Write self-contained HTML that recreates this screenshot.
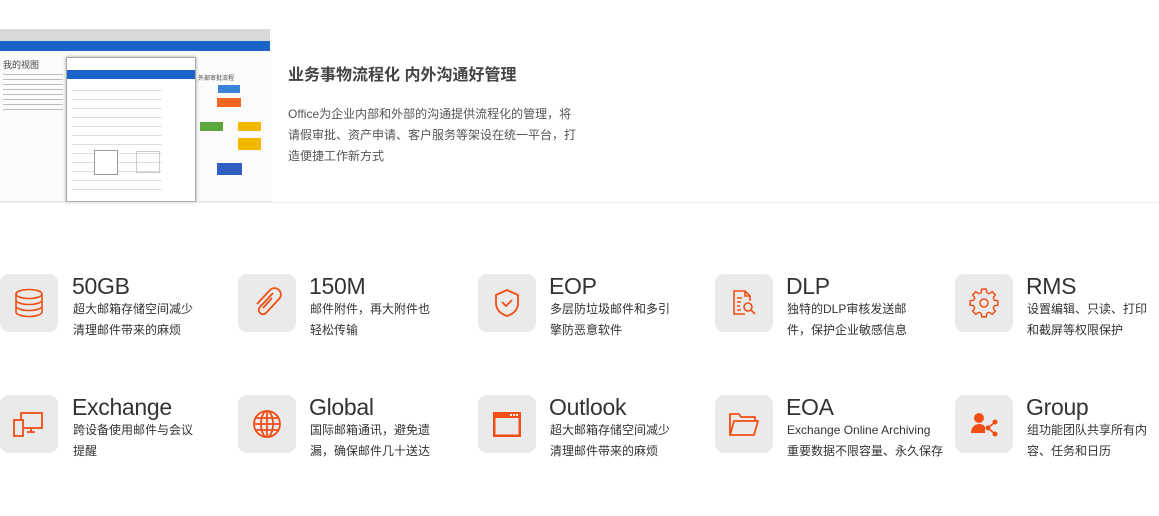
<!DOCTYPE html>
<html><head><meta charset="utf-8"><style>
*{margin:0;padding:0;box-sizing:border-box}
body{width:1159px;height:516px;background:#fff;font-family:"Liberation Sans","Noto Sans CJK SC",sans-serif;position:relative;overflow:hidden;color:#333}
.a{position:absolute}
.box{position:absolute;width:58px;height:58px;border-radius:9px;background:#ebeaea}
.box svg{position:absolute;left:13px;top:13px}
.t{position:absolute;font-size:23px;color:#333;line-height:26px;font-weight:normal;letter-spacing:-0.3px}
.d{position:absolute;font-size:12px;color:#333;line-height:21px}
</style></head><body>
<!-- screenshot -->
<div class="a" style="left:0;top:29px;width:272px;height:173px;background:#fbfbfb;border-bottom:1px solid #e8e8e8"></div>
<div class="a" style="left:0;top:29px;width:270px;height:12px;background:#d9d9d9"></div>
<div class="a" style="left:0;top:41px;width:270px;height:10px;background:#1a63c7"></div>
<div class="a" style="left:3px;top:58px;font-size:9px;color:#444">我的视图</div>
<div class="a" style="left:3px;top:74px;width:60px;height:40px;background:repeating-linear-gradient(#bbb 0 1px,transparent 1px 5px)"></div>
<div class="a" style="left:66px;top:57px;width:130px;height:145px;background:#fff;border:1px solid #aaa;box-shadow:0 0 3px #999"></div>
<div class="a" style="left:67px;top:70px;width:128px;height:9px;background:#1a63c7"></div>
<div class="a" style="left:72px;top:90px;width:90px;height:100px;background:repeating-linear-gradient(#ddd 0 1px,transparent 1px 9px)"></div>
<div class="a" style="left:94px;top:150px;width:24px;height:25px;border:1px solid #999;background:#fff"></div>
<div class="a" style="left:136px;top:151px;width:24px;height:22px;border:1px solid #ccc"></div>
<div class="a" style="left:218px;top:85px;width:22px;height:8px;background:#3b83d6"></div>
<div class="a" style="left:217px;top:98px;width:24px;height:9px;background:#f26522"></div>
<div class="a" style="left:200px;top:122px;width:23px;height:9px;background:#5aa83c"></div>
<div class="a" style="left:238px;top:122px;width:23px;height:9px;background:#f5b800"></div>
<div class="a" style="left:238px;top:138px;width:23px;height:12px;background:#f5b800"></div>
<div class="a" style="left:217px;top:163px;width:25px;height:12px;background:#2f5fc0"></div>
<div class="a" style="left:198px;top:73px;font-size:6px;color:#444">外部审批流程</div>
<!-- divider -->
<div class="a" style="left:0;top:202px;width:1159px;height:1px;background:#ececec"></div>
<div class="a" style="left:288px;top:66px;font-size:16px;font-weight:bold;color:#444;line-height:20px">业务事物流程化 内外沟通好管理</div>
<div class="a" style="left:288px;top:104px;width:300px;font-size:12px;color:#555;line-height:21px">Office为企业内部和外部的沟通提供流程化的管理，将<br>请假审批、资产申请、客户服务等架设在统一平台，打<br>造便捷工作新方式</div>

<!-- row 1 -->
<div class="box" style="left:0;top:274px"><svg width="32" height="32" viewBox="0 0 32 32" fill="none" stroke="#f04e14" stroke-width="1.6"><ellipse cx="16" cy="7" rx="13" ry="4.5"/><path d="M3 7v18c0 2.5 6 4.5 13 4.5s13-2 13-4.5V7M3 13c0 2.5 6 4.5 13 4.5s13-2 13-4.5M3 19c0 2.5 6 4.5 13 4.5s13-2 13-4.5"/></svg></div>
<div class="t" style="left:72px;top:273px">50GB</div>
<div class="d" style="left:73px;top:299px">超大邮箱存储空间减少<br>清理邮件带来的麻烦</div>

<div class="box" style="left:238px;top:274px"><svg width="32" height="32" viewBox="0 0 32 32" fill="none" stroke="#f04e14" stroke-width="1.8"><path d="M22 6L9 20a4 4 0 0 0 6 6l13-14a6 6 0 0 0-9-9L6 17"/><path d="M21 11L12 21"/></svg></div>
<div class="t" style="left:309px;top:273px">150M</div>
<div class="d" style="left:310px;top:299px">邮件附件，再大附件也<br>轻松传输</div>

<div class="box" style="left:478px;top:274px"><svg width="32" height="32" viewBox="0 0 32 32" fill="none" stroke="#f04e14" stroke-width="1.8"><path d="M16 3l11 5v8c0 7-5 11-11 13C10 27 5 23 5 16V8z"/><path d="M11 15l4 4 6-6"/></svg></div>
<div class="t" style="left:549px;top:273px">EOP</div>
<div class="d" style="left:550px;top:299px">多层防垃圾邮件和多引<br>擎防恶意软件</div>

<div class="box" style="left:715px;top:274px"><svg width="32" height="32" viewBox="0 0 32 32" fill="none" stroke="#f04e14" stroke-width="1.6"><path d="M22 14V9l-5-5H6v23h11"/><path d="M17 4v5h5M9 11h5M9 15h4M9 19h3M9 23h4"/><circle cx="20" cy="20" r="4"/><path d="M23 23l4 4"/></svg></div>
<div class="t" style="left:786px;top:273px">DLP</div>
<div class="d" style="left:787px;top:299px">独特的DLP审核发送邮<br>件，保护企业敏感信息</div>

<div class="box" style="left:955px;top:274px"><svg width="32" height="32" viewBox="0 0 32 32" fill="none" stroke="#f04e14" stroke-width="1.5">
<defs><path id="tooth" d="M26.09 13.1L29.83 13.81V18.19L26.09 18.9"/></defs>
<use href="#tooth"/><use href="#tooth" transform="rotate(45 16 16)"/><use href="#tooth" transform="rotate(90 16 16)"/><use href="#tooth" transform="rotate(135 16 16)"/><use href="#tooth" transform="rotate(180 16 16)"/><use href="#tooth" transform="rotate(225 16 16)"/><use href="#tooth" transform="rotate(270 16 16)"/><use href="#tooth" transform="rotate(315 16 16)"/>
<circle cx="16" cy="16" r="10.5" stroke-dasharray="0 2.93 2.39 2.93"/>
<circle cx="16" cy="16" r="4"/></svg></div>
<div class="t" style="left:1026px;top:273px">RMS</div>
<div class="d" style="left:1027px;top:299px">设置编辑、只读、打印<br>和截屏等权限保护</div>

<!-- row 2 -->
<div class="box" style="left:0;top:395px"><svg width="32" height="32" viewBox="0 0 32 32" fill="none" stroke="#f04e14" stroke-width="1.8"><rect x="8" y="5" width="21" height="15"/><path d="M14 24h8M18 20v4"/><rect x="1" y="12" width="9" height="16" fill="#ebeaea"/></svg></div>
<div class="t" style="left:72px;top:394px">Exchange</div>
<div class="d" style="left:73px;top:420px">跨设备使用邮件与会议<br>提醒</div>

<div class="box" style="left:238px;top:395px"><svg width="32" height="32" viewBox="0 0 32 32" fill="none" stroke="#f04e14" stroke-width="1.8"><circle cx="16" cy="16" r="13"/><ellipse cx="16" cy="16" rx="6" ry="13"/><path d="M3 16h26M16 3v26M5 10h22M5 22h22"/></svg></div>
<div class="t" style="left:309px;top:394px">Global</div>
<div class="d" style="left:310px;top:420px">国际邮箱通讯，避免遗<br>漏，确保邮件几十送达</div>

<div class="box" style="left:478px;top:395px"><svg width="32" height="32" viewBox="0 0 32 32"><rect x="2" y="4" width="28" height="25" fill="#f04e14"/><rect x="4.5" y="10" width="23" height="16.5" fill="#ebeaea"/><rect x="19" y="6" width="2" height="2" fill="#fff"/><rect x="22" y="6" width="2" height="2" fill="#fff"/><rect x="25" y="6" width="2" height="2" fill="#fff"/></svg></div>
<div class="t" style="left:549px;top:394px">Outlook</div>
<div class="d" style="left:550px;top:420px">超大邮箱存储空间减少<br>清理邮件带来的麻烦</div>

<div class="box" style="left:715px;top:395px"><svg width="32" height="32" viewBox="0 0 32 32" fill="none" stroke="#f04e14" stroke-width="1.8" stroke-linejoin="round"><path d="M2 27V6h9l2 3h14v4"/><path d="M2 27l4-14h24l-4 14z"/></svg></div>
<div class="t" style="left:786px;top:394px">EOA</div>
<div class="d" style="left:787px;top:420px">Exchange Online Archiving<br>重要数据不限容量、永久保存</div>

<div class="box" style="left:955px;top:395px"><svg width="32" height="32" viewBox="0 0 32 32" fill="#f04e14"><circle cx="11" cy="10" r="5"/><path d="M3 25c0-6 4-9 8-9 3 0 5 1 6 3v6z"/><circle cx="27" cy="14" r="2.5"/><circle cx="20" cy="20" r="2.5"/><circle cx="27" cy="26" r="2.5"/><path d="M20 20L27 14M20 20L27 26" stroke="#f04e14" stroke-width="1.6"/></svg></div>
<div class="t" style="left:1026px;top:394px">Group</div>
<div class="d" style="left:1027px;top:420px">组功能团队共享所有内<br>容、任务和日历</div>
</body></html>
